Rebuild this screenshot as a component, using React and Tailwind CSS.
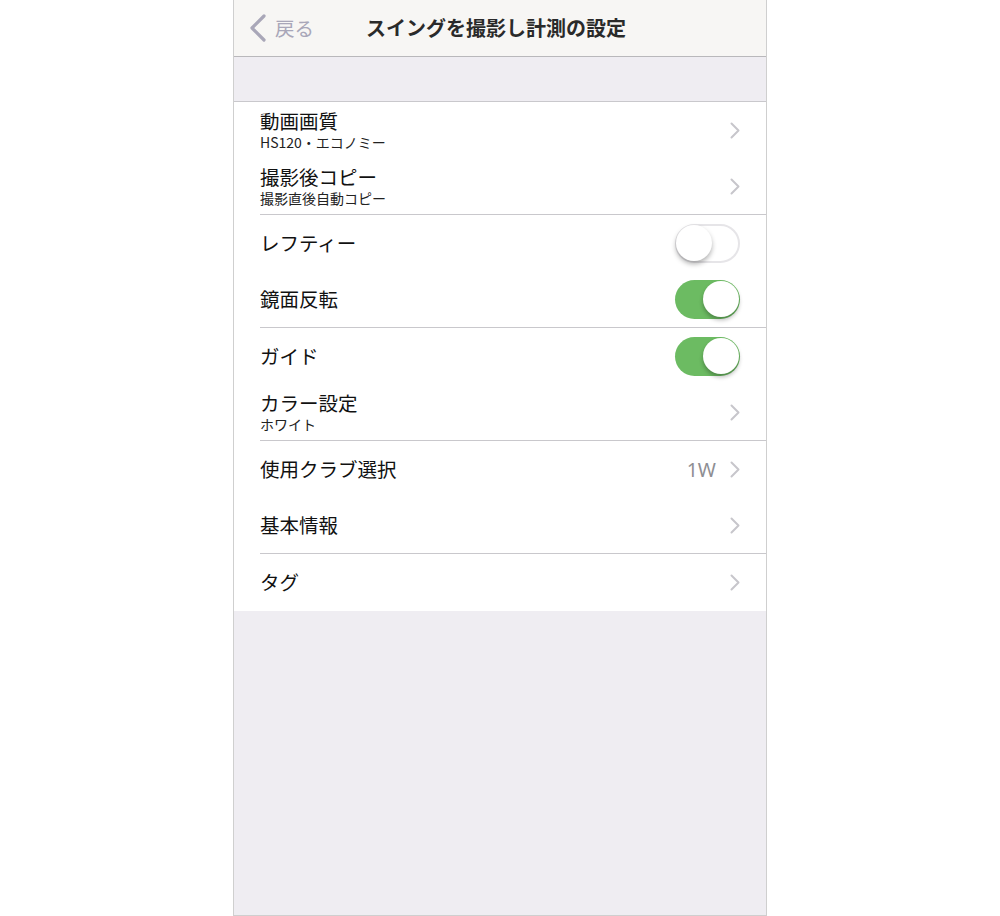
import React from "react";

const FONT = { fontFamily: '"Noto Sans CJK JP", "Noto Sans", sans-serif' };

function Chevron() {
  return (
    <svg width="10" height="17" viewBox="0 0 10 17" className="shrink-0">
      <polyline points="1.5,1.5 8.5,8.5 1.5,15.5" fill="none" stroke="#c7c6cb" strokeWidth="2" strokeLinecap="round" strokeLinejoin="round" />
    </svg>
  );
}

function Toggle({ on }) {
  return on ? (
    <div className="relative w-[65px] h-[39px] rounded-full bg-[#6cbb62] shrink-0">
      <div className="absolute right-[1px] top-[1.5px] w-[36px] h-[36px] rounded-full bg-white shadow-[0_3px_4px_rgba(0,0,0,0.28)]" />
    </div>
  ) : (
    <div className="relative w-[65px] h-[39px] rounded-full bg-white border-2 border-[#e6e5e8] shrink-0">
      <div className="absolute left-[-1px] top-[-0.5px] w-[36px] h-[36px] rounded-full bg-white shadow-[0_3px_5px_rgba(0,0,0,0.3)]" />
    </div>
  );
}

function Row({ title, sub, right, border }) {
  return (
    <div className={`flex items-center justify-between h-[56.5px] pr-[26px] ${border ? "border-b border-[#c9c8cc]" : ""}`}>
      {sub ? (
        <div className="flex flex-col gap-[2px]">
          <span className="text-[19.5px] leading-[22px] text-[#111]">{title}</span>
          <span className="text-[14px] leading-[16px] text-[#222]">{sub}</span>
        </div>
      ) : (
        <span className="text-[19.5px] leading-[22px] text-[#111]">{title}</span>
      )}
      {right}
    </div>
  );
}

export default function App() {
  return (
    <div className="w-full h-[916px] bg-white flex justify-center" style={FONT}>
      <div className="w-[534px] h-[916px] border-x border-b border-[#cfcfcf] bg-[#efedf2] flex flex-col">
        <div className="relative h-[57px] border-b border-[#b9b8bb] bg-[#f7f6f4] flex items-center justify-center shrink-0">
          <div className="absolute left-[15px] top-0 h-full flex items-center gap-[8px]">
            <svg width="18" height="28" viewBox="0 0 18 28">
              <polyline points="15,2 3,14 15,26" fill="none" stroke="#a9a7b8" strokeWidth="3.2" strokeLinecap="round" strokeLinejoin="round" />
            </svg>
            <span className="text-[19.5px] text-[#a9a7b9] leading-none">戻る</span>
          </div>
          <span className="text-[20px] font-bold text-[#2a2a2a] mr-[8px] leading-none">スイングを撮影し計測の設定</span>
        </div>
        <div className="h-[45px] border-b border-[#c9c8cc] shrink-0" />
        <div className="bg-white">
          <div className="ml-[26px]">
            <Row title="動画画質" sub="HS120・エコノミー" right={<Chevron />} />
            <Row title="撮影後コピー" sub="撮影直後自動コピー" right={<Chevron />} border />
            <Row title="レフティー" right={<Toggle on={false} />} />
            <Row title="鏡面反転" right={<Toggle on />} border />
            <Row title="ガイド" right={<Toggle on />} />
            <Row title="カラー設定" sub="ホワイト" right={<Chevron />} border />
            <Row
              title="使用クラブ選択"
              right={
                <div className="flex items-center gap-[14px]">
                  <span className="text-[19.5px] leading-none text-[#8e8e93]" style={{ fontFamily: '"Noto Sans", sans-serif' }}>1W</span>
                  <Chevron />
                </div>
              }
            />
            <Row title="基本情報" right={<Chevron />} border />
            <Row title="タグ" right={<Chevron />} />
          </div>
        </div>
      </div>
    </div>
  );
}
